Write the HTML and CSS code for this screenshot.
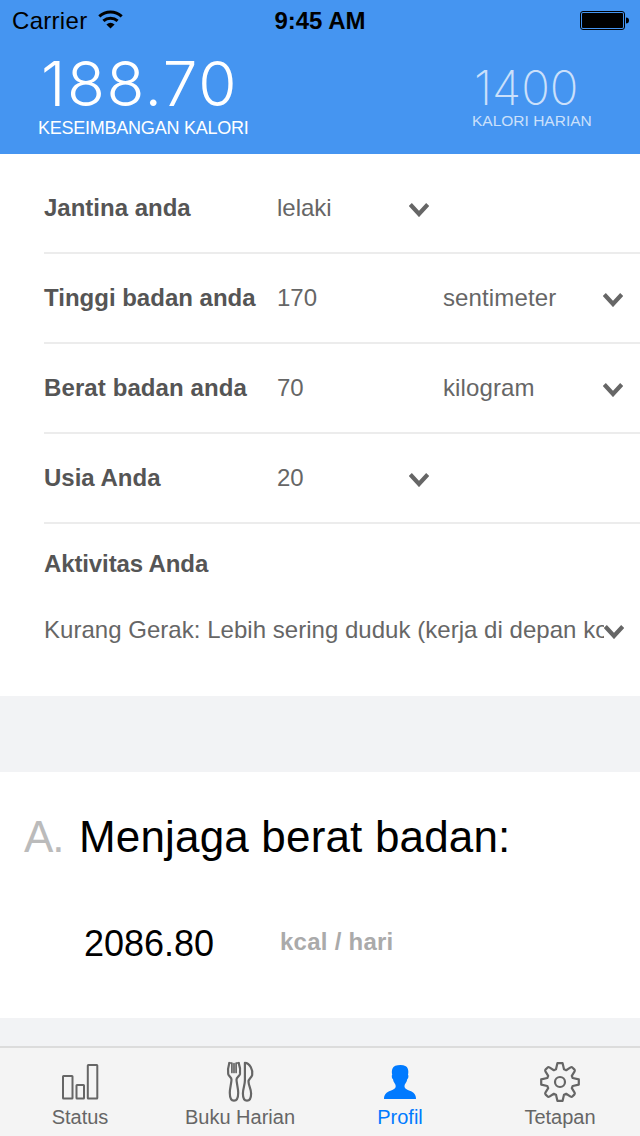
FILE: index.html
```html
<!DOCTYPE html>
<html lang="ms">
<head>
<meta charset="utf-8">
<title>Profil</title>
<link rel="stylesheet" href="styles.css">
</head>
<body>
<svg class="defs" width="0" height="0"><defs>
<symbol id="chevron" viewBox="0 0 20 14"><path d="M1.3 1.500 10 11 18.700 1.500" fill="none" stroke="#666" stroke-width="4.200"/></symbol>
</defs></svg>
<div class="screen">
  <header class="header">
    <div class="statusbar">
      <div class="carrier"><span>Carrier</span>
        <svg class="wifi" width="26" height="20" viewBox="0 0 26 20"><g fill="none" stroke="#000" stroke-width="3"><path d="M1.300 6.400a16.500 16.500 0 0 1 22.400 0"/><path d="M5.400 10.900a10.600 10.600 0 0 1 14.200 0"/></g><path d="M8.400 14.400a6.300 6.300 0 0 1 8.200 0L12.500 18.500z"/></svg>
      </div>
      <div class="clock">9:45 AM</div>
      <svg class="battery" width="50" height="20" viewBox="0 0 50 20"><rect x=".5" y=".5" width="44" height="18" rx="2.500" fill="none" stroke="#000"/><rect x="2" y="2" width="41" height="15" rx="1"/><path d="M46 6.500q3 0 3 3t-3 3z"/></svg>
    </div>
    <div class="totals">
      <div class="balance"><div class="balance-value">188.70</div><div class="balance-label">KESEIMBANGAN KALORI</div></div>
      <div class="daily"><div class="daily-value">1400</div><div class="daily-label">KALORI HARIAN</div></div>
    </div>
  </header>
  <main class="content">
    <section class="form">
      <div class="row first"><b>Jantina anda</b><span>lelaki</span><svg class="chev near"><use href="#chevron"/></svg></div>
      <div class="row"><b>Tinggi badan anda</b><span>170</span><span class="unit">sentimeter</span><svg class="chev"><use href="#chevron"/></svg></div>
      <div class="row"><b class="weight">Berat badan anda</b><span>70</span><span class="unit">kilogram</span><svg class="chev"><use href="#chevron"/></svg></div>
      <div class="row"><b>Usia Anda</b><span>20</span><svg class="chev near"><use href="#chevron"/></svg></div>
      <div class="activity"><b>Aktivitas Anda</b><div class="select"><span class="select-text">Kurang Gerak: Lebih sering duduk (kerja di depan komputer)</span><svg class="chev"><use href="#chevron"/></svg></div></div>
    </section>
    <section class="result">
      <h1><span class="letter">A.</span><span class="title">Menjaga berat badan:</span></h1>
      <div class="amount"><span class="number">2086.80</span><b class="per">kcal / hari</b></div>
    </section>
  </main>
  <nav class="tabs">
    <div class="tab"><svg width="44" height="42" viewBox="0 0 44 42"><g fill="none" stroke="#666" stroke-width="2"><rect x="5" y="16" width="9.500" height="22.500" rx=".5"/><rect x="18.500" y="25" width="7.500" height="13.500" rx=".5"/><rect x="29.800" y="5" width="9.500" height="33.500" rx=".5"/></g></svg><span>Status</span></div>
    <div class="tab"><svg width="44" height="42" viewBox="0 0 44 42"><g fill="none" stroke="#666" stroke-width="2.200" stroke-linecap="round" stroke-linejoin="round"><path d="M11.300 3C10.400 6 9.600 10.500 10.200 14c.5 2.700 3.500 2.800 3.300 5.800-.3 4.700-1.700 8.200-1.700 13 0 4.500 1.500 7.900 4.200 7.900s4.200-3.400 4.200-7.900c0-4.800-1.400-8.300-1.700-13-.2-3 2.900-3.100 3.500-5.800.6-3.500-.2-8-1.300-11"/><path d="M11.300 3h2.600V12.500M20.700 3h-2.600V12.500M16 3.500V12.500" stroke-width="1.700"/><path d="M26.900 2.800V20.500C26.900 25 24.900 28.500 24.900 33.500c0 4.200 1.500 7.200 4.100 7.200s4.100-3 4.100-7.200c0-5-2.600-8-2.600-12 0-2.500 3-3.500 3.700-6.500C35.300 10.500 31.900 2.800 26.900 2.800z"/></g></svg><span>Buku Harian</span></div>
    <div class="tab active"><svg width="44" height="42" viewBox="0 0 44 42"><path fill="#007aff" d="M6 39c0-4.500 2.500-6.700 6.500-8.200 2.500-.9 5.200-2.200 5.200-4.300 0-1.500-.5-2.300-1.400-3.700-.7-1.100-1.100-2.300-1.300-3.600-.8-.6-1.200-1.700-1.200-3 0-.7.100-1.200.4-1.500-.5-2-.5-4.200.2-6C15.400 6 18.500 5 22.500 5c4 0 6.500 1.300 7.300 3.700.7 1.800.7 4 .2 6 .3.300.4.800.4 1.500 0 1.300-.4 2.400-1.200 3-.2 1.300-.6 2.500-1.300 3.600-.9 1.400-1.400 2.200-1.400 3.700 0 2.100 2.700 3.400 5.200 4.300 4 1.500 6.300 3.700 6.300 8.200z"/></svg><span>Profil</span></div>
    <div class="tab"><svg width="44" height="42" viewBox="-22 -22 44 42"><g fill="none" stroke="#666" stroke-width="2.200" stroke-linejoin="round"><path d="M-4-12.700-2.600-18.800H2.600L4-12.700 6.150-11.800 10.600-14.600Q11.700-15.200 12.600-14.300L14.300-12.600Q15.200-11.700 14.600-10.600L11.800-6.150 12.700-4 18.800-2.600V2.600L12.700 4 11.800 6.150 14.600 10.600Q15.200 11.700 14.300 12.600L12.600 14.300Q11.700 15.200 10.600 14.600L6.150 11.800 4 12.700 2.600 18.800H-2.600L-4 12.700-6.150 11.800-10.600 14.600Q-11.700 15.200-12.600 14.300L-14.300 12.600Q-15.200 11.700-14.600 10.600L-11.800 6.150-12.700 4-18.800 2.600V-2.600L-12.700-4-11.800-6.150-14.600-10.600Q-15.200-11.700-14.300-12.600L-12.600-14.300Q-11.700-15.200-10.600-14.600L-6.150-11.800z"/><circle r="5"/></g></svg><span>Tetapan</span></div>
  </nav>
</div>
</body>
</html>
```
FILE: styles.css
```css
* { box-sizing: border-box; }
body { margin: 0; font-family: "Liberation Sans", Arial, sans-serif; }
svg { display: block; flex: none; overflow: visible; }
.defs { position: absolute; }
.screen { width: 640px; height: 1136px; display: flex; flex-direction: column; overflow: hidden; background: #f2f3f5; }

.header { height: 154px; background: #4595f1; }
.statusbar { height: 40px; display: grid; grid-template-columns: 220px 176px 1fr; align-items: start; padding: 0 10px 0 12px; font-size: 24px; line-height: 42px; }
.carrier { display: flex; gap: 11px; letter-spacing: .3px; }
.wifi { margin-top: 10px; }
.clock { text-align: center; font-weight: bold; font-size: 24px; white-space: nowrap; }
.battery { justify-self: end; margin-top: 11px; }
.totals { display: flex; justify-content: space-between; padding: 15px 48px 0 38px; color: #fff; white-space: nowrap; }
.balance-value { padding-left: 3px; font: 270 62px/58px Inter, sans-serif; letter-spacing: 1.6px; }
.balance-label { font-size: 18px; line-height: 30px; letter-spacing: -.24px; }
.daily { color: #cbe0fb; width: 120px; }
.daily-value { padding-left: 2px; font: 250 47.5px/66px Inter, sans-serif; }
.daily-label { font-size: 15.500px; line-height: 18px; margin-top: -9px; }

.content { height: 892px; }
.form { height: 542px; padding-left: 44px; background: #fff; font-size: 24px; color: #666; }
.form b { color: #555; }
.row { height: 90px; display: grid; grid-template-columns: 233px 166px 1fr 37px; align-items: center; line-height: 88px; border-bottom: 2px solid #ececec; white-space: nowrap; }
.row.first { height: 100px; padding-top: 10px; }
.weight { letter-spacing: .1px; }
.unit { letter-spacing: .12px; }
.chev { width: 20px; height: 14px; margin-top: 3px; }
.row .near { margin-left: -34px; }
.activity { padding-top: 20px; }
.activity b { display: block; line-height: 40px; letter-spacing: -.12px; }
.select { display: flex; padding-top: 26px; line-height: 40px; }
.select-text { width: 560px; overflow: hidden; white-space: nowrap; letter-spacing: .03px; }
.select .chev { margin-top: 15px; }
.result { height: 246px; margin-top: 76px; padding-top: 37px; background: #fff; white-space: nowrap; }
.result h1 { display: flex; margin: 0; padding-left: 24px; font-size: 44px; font-weight: normal; line-height: 56px; }
.letter { width: 55px; color: #bbb; letter-spacing: -1px; }
.title { letter-spacing: .17px; }
.amount { display: flex; padding: 51px 0 0 84px; line-height: 56px; }
.number { width: 196px; font-size: 36px; }
.per { font-size: 24px; color: #aaa; line-height: 52px; letter-spacing: .25px; }

.tabs { height: 90px; display: grid; grid-template-columns: repeat(4, 160px); background: #f4f4f4; border-top: 2px solid #dcdcdc; }
.tab { display: flex; flex-direction: column; align-items: center; padding-top: 12px; font-size: 20px; line-height: 30px; color: #666; white-space: nowrap; }
.active { color: #007aff; }
```
